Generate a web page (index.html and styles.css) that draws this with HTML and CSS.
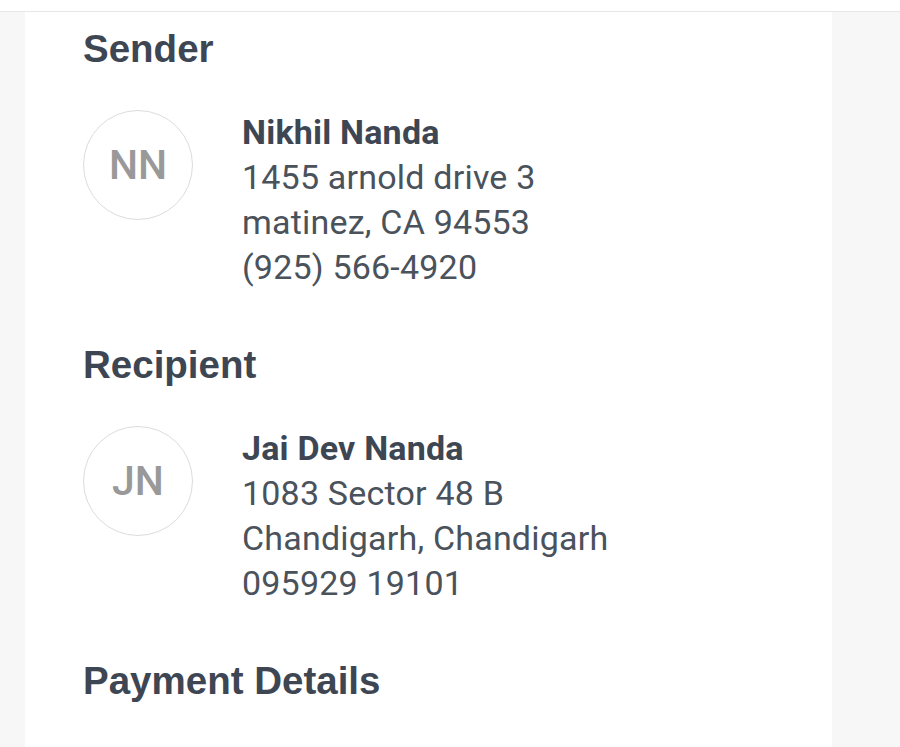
FILE: index.html
```html
<!DOCTYPE html>
<html>
<head>
<meta charset="utf-8">
<link rel="stylesheet" href="styles.css">
</head>
<body>
<div class="topbar"></div>
<main class="card">
  <section class="section">
    <h2 class="heading">Sender</h2>
    <div class="party">
      <div class="avatar">NN</div>
      <div class="info">
        <div class="name">Nikhil Nanda</div>
        <div class="line">1455 arnold drive 3</div>
        <div class="line">matinez, CA 94553</div>
        <div class="line">(925) 566-4920</div>
      </div>
    </div>
  </section>
  <section class="section">
    <h2 class="heading">Recipient</h2>
    <div class="party">
      <div class="avatar">JN</div>
      <div class="info">
        <div class="name">Jai Dev Nanda</div>
        <div class="line">1083 Sector 48 B</div>
        <div class="line">Chandigarh, Chandigarh</div>
        <div class="line">095929 19101</div>
      </div>
    </div>
  </section>
  <section class="section">
    <h2 class="heading">Payment Details</h2>
  </section>
</main>
</body>
</html>
```
FILE: styles.css
```css
html, body {
  margin: 0;
  padding: 0;
  height: 100%;
}
body {
  background: #f7f7f8;
  overflow: hidden;
  display: flex;
  flex-direction: column;
}
.topbar {
  height: 11px;
  background: #ffffff;
  border-bottom: 1px solid #e6e7e9;
  flex: none;
}
.card {
  flex: 1;
  margin-left: 25px;
  width: 807px;
  background: #ffffff;
  box-sizing: border-box;
  padding: 14px 0 0 57px;
  overflow: hidden;
}
.section {
  padding-bottom: 52px;
}
.heading {
  margin: 0 0 38px 1px;
  font-family: "Liberation Sans", Arial, sans-serif;
  font-weight: 700;
  font-size: 38.5px;
  line-height: 46px;
  color: #3d4652;
}
.party {
  display: flex;
  align-items: flex-start;
  gap: 49px;
}
.avatar {
  flex: none;
  width: 110px;
  height: 110px;
  box-sizing: border-box;
  border: 1px solid #dcdcdc;
  border-radius: 50%;
  margin-left: 1px;
  display: flex;
  align-items: center;
  justify-content: center;
  font-family: Roboto, sans-serif;
  font-weight: 500;
  font-size: 41px;
  color: #999999;
}
.info {
  font-family: Roboto, sans-serif;
  font-size: 34px;
  letter-spacing: 0.2px;
  line-height: 45px;
  color: #4a525c;
}
.name {
  font-weight: 700;
  color: #3d4652;
}
```
